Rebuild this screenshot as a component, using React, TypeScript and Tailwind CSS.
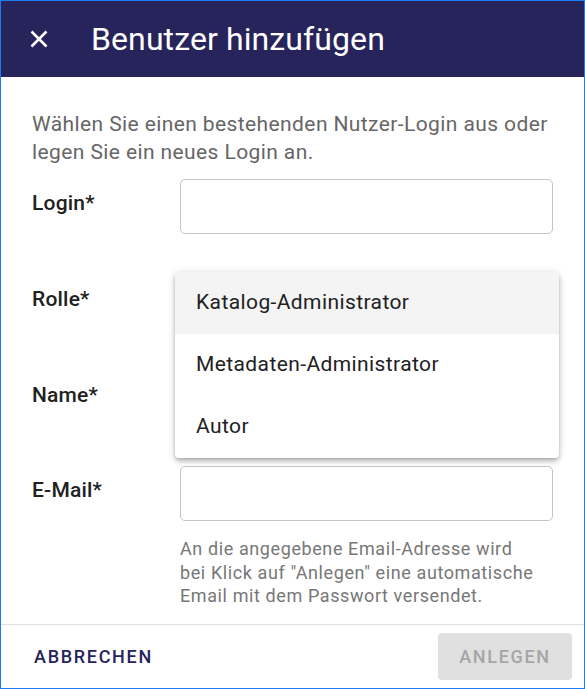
import React from "react";

export default function App() {
  const font = { fontFamily: "Roboto, 'Noto Sans', sans-serif" };
  return (
    <div
      className="w-[585px] h-[689px] border border-[#1a7cf0] bg-white flex flex-col overflow-hidden"
      style={font}
    >
      <div className="h-[76px] shrink-0 bg-[#27235b] flex items-center text-white">
        <div className="w-[61px] pl-[29px] flex items-center">
          <svg width="18" height="18" viewBox="0 0 18 18" fill="none">
            <path d="M1.5 1.5 L16.5 16.5 M16.5 1.5 L1.5 16.5" stroke="white" strokeWidth="2.6" />
          </svg>
        </div>
        <div className="pl-[29px] text-[32px] leading-none tracking-[0.1px]">Benutzer hinzufügen</div>
      </div>

      <div className="relative flex-1 px-[31px] pt-[33px]">
        <p className="text-[21px] leading-[28px] text-[#666666] tracking-[0.4px]">
          Wählen Sie einen bestehenden Nutzer-Login aus oder legen Sie ein neues Login an.
        </p>
        <div className="mt-[13px] flex flex-col gap-[40.7px]">
          {["Login*", "Rolle*", "Name*", "E-Mail*"].map((l) => (
            <div key={l} className="flex items-center">
              <div className="w-[148px] text-[21px] font-medium text-[#212121] tracking-[0.2px] -mt-[5px]">{l}</div>
              <div className="w-[374px] h-[55px] border border-[#c4c4c4] rounded-[5px]" />
            </div>
          ))}
        </div>
        <div className="ml-[148px] mt-[16px] text-[18px] leading-[23.5px] text-[#777777] tracking-[0.6px]">
          An die angegebene Email-Adresse wird
          <br />
          bei Klick auf "Anlegen" eine automatische
          <br />
          Email mit dem Passwort versendet.
        </div>

        <div className="absolute left-[174px] top-[195px] w-[384px] bg-white rounded-[4px] shadow-[0_2px_4px_-1px_rgba(0,0,0,0.2),0_4px_5px_0_rgba(0,0,0,0.14),0_1px_10px_0_rgba(0,0,0,0.12)] overflow-hidden">
          {["Katalog-Administrator", "Metadaten-Administrator", "Autor"].map((t, i) => (
            <div
              key={t}
              className={`h-[62px] flex items-center pl-[21px] text-[21px] tracking-[0.4px] text-[#212121] ${i === 0 ? "bg-[#f4f4f4]" : ""}`}
            >
              {t}
            </div>
          ))}
        </div>
      </div>

      <div className="h-[64px] shrink-0 border-t border-[#e0e0e0] flex items-center justify-between pl-[33px] pr-[12px]">
        <div className="text-[18px] font-medium tracking-[1.7px] text-[#27235b]">ABBRECHEN</div>
        <div className="w-[134px] h-[47px] rounded-[4px] bg-[#e0e0e0] flex items-center justify-center text-[18px] font-medium tracking-[1.7px] text-[#a6a6a6]">
          ANLEGEN
        </div>
      </div>
    </div>
  );
}
